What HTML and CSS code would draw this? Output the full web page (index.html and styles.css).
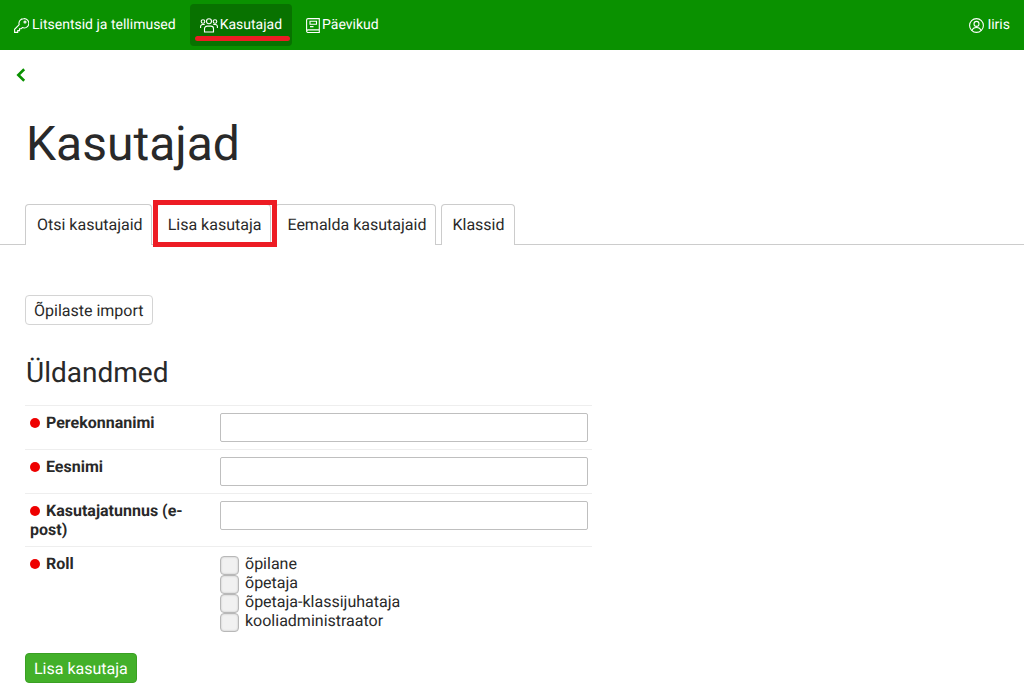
FILE: index.html
```html
<!DOCTYPE html>
<html lang="et">
<head>
<meta charset="utf-8">
<title>Kasutajad</title>
<link rel="stylesheet" href="styles.css">
</head>
<body>
<nav class="topbar">
  <a class="nav-item">
    <svg class="nav-icon" viewBox="0 0 15 15"><path d="M9.700.6a4.700 4.700 0 0 0-4.500 6.100L.6 11.300v3.100h3.100v-1.800h1.800v-1.800h1.600l1.200-1.200A4.700 4.700 0 1 0 9.700.6Z"/><circle cx="11" cy="4" r="1"/></svg>
    Litsentsid ja tellimused
  </a>
  <a class="nav-item nav-active">
    <svg class="nav-icon nav-icon-wide" viewBox="0 0 18 15"><circle cx="9" cy="3.200" r="2.500"/><circle cx="3" cy="3.500" r="1.800"/><circle cx="15" cy="3.500" r="1.800"/><path d="M4.500 14v-3.300A2.600 2.600 0 0 1 7.100 8.100h3.800a2.600 2.600 0 0 1 2.600 2.600V14ZM.6 10V8.400a1.900 1.900 0 0 1 1.900-1.900h2.200M17.400 10V8.400a1.900 1.900 0 0 0-1.900-1.900h-2.200"/></svg>
    Kasutajad
  </a>
  <a class="nav-item">
    <svg class="nav-icon nav-icon-book" viewBox="0 0 14 15"><path d="M.6 12.400V2A1.500 1.500 0 0 1 2.100.6h11.200v11.300H2.100A1.500 1.500 0 0 0 .6 13.100 1.400 1.400 0 0 0 2.100 14.500h11.200v-2.600"/><path d="M4 3.300h6.500v3H4zM4 8.600h3.500"/></svg>
    Päevikud
  </a>
  <a class="nav-item nav-user">
    <svg class="nav-icon" viewBox="0 0 15 15"><circle cx="7.500" cy="7.500" r="6.900"/><circle cx="7.500" cy="5.900" r="2.500"/><path d="M3.200 12.500c.4-2 2.100-3 4.300-3s3.900 1 4.300 3"/></svg>
    Iiris
  </a>
</nav>

<main class="page">
  <a class="back" aria-label="Tagasi">
    <svg viewBox="0 0 10 14"><path d="M8.200 1.200 2.300 7l5.900 5.800"/></svg>
  </a>
  <h1 class="title">Kasutajad</h1>
  <div class="tabs">
    <a class="tab">Otsi kasutajaid</a>
    <a class="tab tab-marked">Lisa kasutaja</a>
    <a class="tab">Eemalda kasutajaid</a>
    <a class="tab">Klassid</a>
  </div>

  <div class="content">
    <a class="btn">Õpilaste import</a>
    <h2 class="section">Üldandmed</h2>
    <div class="form">
      <div class="row">
        <div class="label"><span class="dot"></span>Perekonnanimi</div>
        <div class="field"><input class="input" type="text"></div>
      </div>
      <div class="row">
        <div class="label"><span class="dot"></span>Eesnimi</div>
        <div class="field"><input class="input" type="text"></div>
      </div>
      <div class="row">
        <div class="label"><span class="dot"></span>Kasutajatunnus (e-post)</div>
        <div class="field"><input class="input" type="text"></div>
      </div>
      <div class="row">
        <div class="label"><span class="dot"></span>Roll</div>
        <div class="field checks">
          <label class="check"><span class="box"></span>õpilane</label>
          <label class="check"><span class="box"></span>õpetaja</label>
          <label class="check"><span class="box"></span>õpetaja-klassijuhataja</label>
          <label class="check"><span class="box"></span>kooliadministraator</label>
        </div>
      </div>
    </div>
    <a class="btn btn-primary">Lisa kasutaja</a>
  </div>
</main>
</body>
</html>
```

FILE: styles.css
```css
* { box-sizing: border-box; }

html, body {
  margin: 0;
  padding: 0;
  background: #fff;
  color: #292929;
  font-family: Roboto, "Liberation Sans", sans-serif;
  font-size: 16px;
  line-height: 19px;
  text-rendering: geometricPrecision;
  overflow: hidden;
}

.topbar {
  display: flex;
  align-items: flex-start;
  height: 50px;
  padding: 4px 5px 0 5px;
  background: #0a9100;
  color: #fff;
  font-size: 14px;
}

.nav-item {
  position: relative;
  display: flex;
  align-items: center;
  height: 42px;
  padding: 0 9px;
  border-radius: 4px;
  white-space: nowrap;
}

.nav-active {
  margin: 0 5px;
  padding: 0 10px;
  background: #087200;
}

.nav-active::after {
  content: "";
  position: absolute;
  left: 5px;
  right: 2px;
  bottom: 5px;
  height: 5px;
  border-radius: 3px;
  background: #ed1c24;
}

.nav-user {
  margin-left: auto;
}

.nav-icon {
  width: 15px;
  height: 15px;
  margin-right: 3px;
  fill: none;
  stroke: #fff;
  stroke-width: 1.100;
}

.nav-icon-wide {
  width: 18px;
  margin-right: 2px;
}

.nav-icon-book {
  width: 14px;
  margin-right: 2px;
}

.back {
  display: block;
  width: 10px;
  height: 14px;
  margin: 18px 0 0 16px;
}

.back svg {
  display: block;
  width: 10px;
  height: 14px;
  fill: none;
  stroke: #0a9100;
  stroke-width: 2.600;
}

.title {
  margin: 33px 0 0 26px;
  font-size: 48px;
  line-height: 58px;
  font-weight: 400;
}

.tabs {
  display: flex;
  gap: 4px;
  height: 41px;
  margin-top: 31px;
  padding-left: 25px;
  border-bottom: 1px solid #ccc;
}

.tab {
  height: 41px;
  padding: 10px 9px 10px 11px;
  background: #fff;
  border: 1px solid #ccc;
  border-bottom: 0;
  border-radius: 4px 4px 0 0;
  white-space: nowrap;
}

.tab:first-child { padding-right: 8px; }

.tab:last-child {
  margin-left: 1px;
  padding-left: 10px;
}

.tab-marked {
  position: relative;
  z-index: 1;
}

.tab-marked::after {
  content: "";
  position: absolute;
  left: -4px;
  right: -7px;
  top: -5px;
  bottom: -2px;
  border: 5px solid #ed1c24;
}

.content {
  padding: 50px 0 0 25px;
}

.btn {
  display: inline-block;
  height: 30px;
  padding: 5px 8px;
  background: #fff;
  border: 1px solid #d4d4d4;
  border-radius: 4px;
}

.section {
  margin: 31px 0 15px 1px;
  font-size: 28px;
  line-height: 34px;
  font-weight: 400;
}

.form {
  width: 567px;
  margin-bottom: 6px;
}

.row {
  display: grid;
  grid-template-columns: 190px 1fr;
  border-top: 1px solid #eee;
  padding: 7px 4px 0 5px;
}

.label {
  font-weight: 700;
  padding: 0 5px 7px 0;
}

.dot {
  display: inline-block;
  width: 10px;
  height: 10px;
  margin-right: 6px;
  border-radius: 50%;
  background: #ee0000;
}

.field { padding-bottom: 7px; }

.input {
  display: block;
  width: 100%;
  height: 29px;
  border: 1px solid #bfbfbf;
  border-radius: 2px;
  background: #fff;
}

.checks { padding-bottom: 9px; }

.check {
  display: flex;
  height: 19px;
  align-items: flex-start;
}

.box {
  width: 19px;
  height: 19px;
  margin: 2px 6px 0 0;
  background: #f1f1f1;
  border: 1px solid #b8b8b8;
  border-radius: 4px;
  box-shadow: inset 0 0 2px #bbb;
}

.btn-primary {
  margin-top: 8px;
  background: #43b02a;
  border-color: #3aa024;
  color: #fff;
}
```
